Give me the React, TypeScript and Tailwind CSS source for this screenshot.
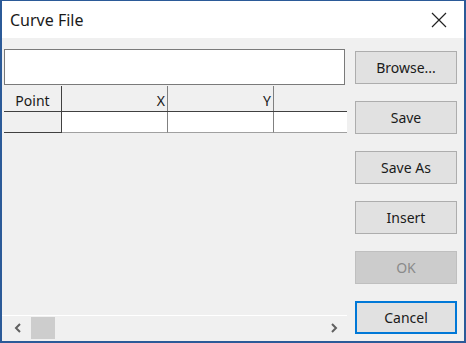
import React from "react";

const font = "font-['Segoe_UI','Noto_Sans',sans-serif]";

const buttons = ["Browse...", "Save", "Save As", "Insert", "OK", "Cancel"];

const Chevron = ({ dir }: { dir: "left" | "right" }) => (
  <svg width="8" height="10" viewBox="0 0 8 10">
    <path
      d={dir === "left" ? "M6 1 L2 5 L6 9" : "M2 1 L6 5 L2 9"}
      fill="none"
      stroke="#606060"
      strokeWidth="2"
    />
  </svg>
);

const App = () => {
  return (
    <div
      className={`flex h-[343px] w-[466px] flex-col border-2 border-t border-[#2b5a98] bg-[#f0f0f0] text-[#1a1a1a] ${font}`}
    >
      {/* title bar */}
      <div className="flex h-[37px] shrink-0 items-center justify-between bg-white pl-[8px] pr-[17px]">
        <span className="text-[16px]">Curve File</span>
        <svg width="16" height="16" viewBox="0 0 16 16">
          <path d="M1 1 L15 15 M15 1 L1 15" stroke="#222" strokeWidth="1.2" />
        </svg>
      </div>

      <div className="flex flex-1">
        {/* left side */}
        <div className="ml-[2px] flex w-[343px] flex-col">
          <div className="mt-[11px] h-[36px] w-[341px] border border-[#7a7a7a] bg-white" />

          <div className="mt-[1px] text-[14px]">
            <div className="flex h-[26px] border-b border-[#404040]">
              <div className="flex w-[58px] items-center justify-center border-r border-[#404040] pt-[4px]">
                Point
              </div>
              <div className="flex w-[106px] items-center justify-end border-r border-[#808080] pr-[2px] pt-[4px]">
                X
              </div>
              <div className="flex w-[106px] items-center justify-end border-r border-[#808080] pr-[2px] pt-[4px]">
                Y
              </div>
              <div className="flex-1" />
            </div>
            <div className="flex h-[21px]">
              <div className="w-[58px] border-r border-b border-[#404040]" />
              <div className="w-[106px] border-r border-b border-r-[#808080] border-b-[#a0a0a0] bg-white" />
              <div className="w-[106px] border-r border-b border-r-[#808080] border-b-[#a0a0a0] bg-white" />
              <div className="flex-1 border-b border-[#a0a0a0] bg-white" />
            </div>
          </div>

          <div className="flex-1" />

          {/* horizontal scrollbar */}
          <div className="-ml-[2px] mb-[2px] flex h-[24px] items-center border-t border-white">
            <div className="flex w-[29px] justify-center pl-[2px]">
              <Chevron dir="left" />
            </div>
            <div className="h-[22px] w-[24px] bg-[#cdcdcd]" />
            <div className="flex-1" />
            <div className="flex w-[26px] justify-center">
              <Chevron dir="right" />
            </div>
          </div>
        </div>

        {/* right side buttons */}
        <div className="ml-[8px] flex flex-col gap-[17px] pt-[13px]">
          {buttons.map((b) => (
            <div
              key={b}
              className={`flex h-[33px] w-[102px] items-center justify-center text-[14px] ${
                b === "OK"
                  ? "border border-[#bfbfbf] bg-[#cccccc] text-[#8a8a8a]"
                  : b === "Cancel"
                  ? "border-2 border-[#0078d7] bg-[#e1e1e1]"
                  : "border border-[#adadad] bg-[#e1e1e1]"
              }`}
            >
              {b}
            </div>
          ))}
        </div>
      </div>
    </div>
  );
};

export default App;
